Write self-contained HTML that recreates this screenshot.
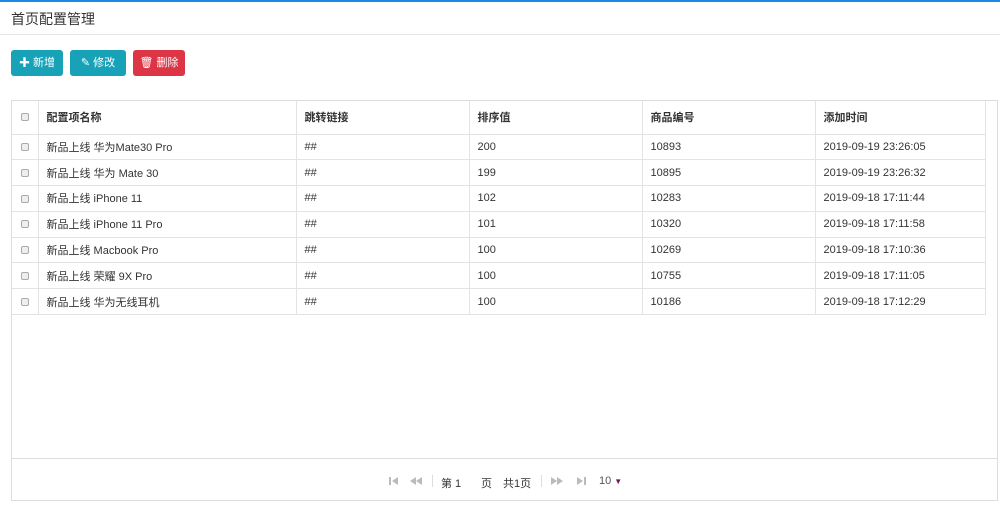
<!DOCTYPE html>
<html><head><meta charset="utf-8"><style>
*{box-sizing:border-box;margin:0;padding:0}
body{width:1000px;height:515px;background:#fff;font-family:"Liberation Sans","Noto Sans CJK SC",sans-serif;font-size:11px;color:#333;border-top:2px solid #1e88e5;position:relative;overflow:hidden}
.title{position:absolute;left:11px;top:7px;font-size:14px;color:#333}
.hr{position:absolute;left:0;right:0;top:32px;border-top:1px solid #e5e5e5}
.btn{position:absolute;top:48px;height:26px;border-radius:3px;color:#fff;font-size:11px;line-height:26px;text-align:center}
.panel{position:absolute;left:11px;top:98px;width:987px;height:401px;border:1px solid #ddd}
table{border-collapse:collapse;position:absolute;left:0;top:0;width:974px}
td,th{border:1px solid #e3e3e3;text-align:left;padding-left:8px;font-weight:normal}
th{height:33px;font-weight:bold;border-top:none}
td{height:25.8px}
td:first-child,th:first-child{border-left:none;width:26px;padding:0;text-align:center}
.cb{display:inline-block;width:8px;height:8px;border:1px solid #aaa;border-radius:2px;background:#eee;vertical-align:middle}
.pag{position:absolute;left:0;right:0;top:357px;border-top:1px solid #ddd;height:43px;font-size:11px;color:#333}
.pag span,.pag svg{position:absolute;top:16px}
.pag svg{top:17px}
.sep{width:1px;height:12px;background:#ddd;position:absolute;top:16px}
</style></head><body>
<div class="title">首页配置管理</div>
<div class="hr"></div>
<div class="btn" style="left:11px;width:52px;background:#17a2b8"><b>✚</b> 新增</div>
<div class="btn" style="left:70px;width:56px;background:#17a2b8">✎ 修改</div>
<div class="btn" style="left:133px;width:52px;background:#dc3545">🗑 删除</div>
<div class="panel">
<table>
<tr><th><span class="cb"></span></th><th style="width:258px">配置项名称</th><th style="width:173px">跳转链接</th><th style="width:173px">排序值</th><th style="width:173px">商品编号</th><th>添加时间</th></tr>
<tr><td><span class="cb"></span></td><td>新品上线 华为Mate30 Pro</td><td>##</td><td>200</td><td>10893</td><td>2019-09-19 23:26:05</td></tr>
<tr><td><span class="cb"></span></td><td>新品上线 华为 Mate 30</td><td>##</td><td>199</td><td>10895</td><td>2019-09-19 23:26:32</td></tr>
<tr><td><span class="cb"></span></td><td>新品上线 iPhone 11</td><td>##</td><td>102</td><td>10283</td><td>2019-09-18 17:11:44</td></tr>
<tr><td><span class="cb"></span></td><td>新品上线 iPhone 11 Pro</td><td>##</td><td>101</td><td>10320</td><td>2019-09-18 17:11:58</td></tr>
<tr><td><span class="cb"></span></td><td>新品上线 Macbook Pro</td><td>##</td><td>100</td><td>10269</td><td>2019-09-18 17:10:36</td></tr>
<tr><td><span class="cb"></span></td><td>新品上线 荣耀 9X Pro</td><td>##</td><td>100</td><td>10755</td><td>2019-09-18 17:11:05</td></tr>
<tr><td><span class="cb"></span></td><td>新品上线 华为无线耳机</td><td>##</td><td>100</td><td>10186</td><td>2019-09-18 17:12:29</td></tr>
</table>
<div class="pag">
<svg style="left:377px" width="9" height="10"><rect x="0" y="1" width="2" height="8" fill="#bbb"/><path d="M9 1L3 5L9 9Z" fill="#bbb"/></svg>
<svg style="left:398px" width="12" height="10"><path d="M6 1L0 5L6 9ZM12 1L6 5L12 9Z" fill="#bbb"/></svg>
<div class="sep" style="left:420px"></div>
<span style="left:429px">第 1</span><span style="left:469px">页</span><span style="left:491px">共1页</span>
<div class="sep" style="left:529px"></div>
<svg style="left:539px" width="12" height="10"><path d="M0 1L6 5L0 9ZM6 1L12 5L6 9Z" fill="#bbb"/></svg>
<svg style="left:565px" width="9" height="10"><path d="M0 1L6 5L0 9Z" fill="#bbb"/><rect x="7" y="1" width="2" height="8" fill="#bbb"/></svg>
<span style="left:587px;color:#555">10 <span style="position:static;color:#6a1b5a;font-size:8px">▼</span></span>
</div>
</div>
</body></html>
